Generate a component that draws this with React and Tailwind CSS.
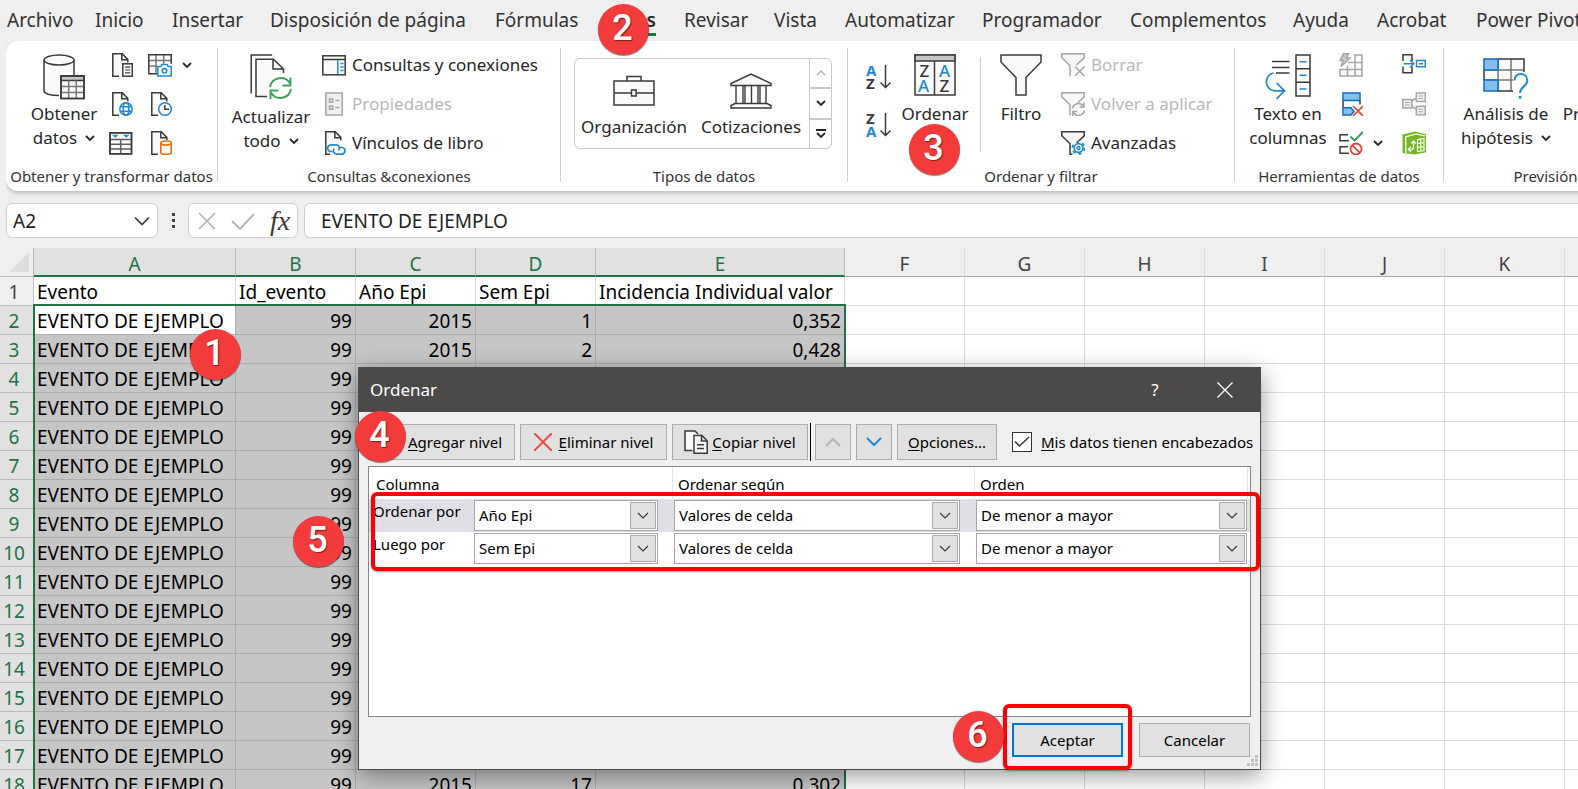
import React from "react";

const INK = "#3b3a39";
const BLUE = "#1f8ad2";
const GRAY = "#a6a5a4";
const PAPER = "#fafafa";

function Svg({ w, h, children, className = "" }) {
  return (
    <svg
      width={w}
      height={h}
      viewBox={`0 0 ${w} ${h}`}
      fill="none"
      strokeWidth="1.5"
      stroke={INK}
      aria-hidden="true"
      className={`block shrink-0 ${className}`}
    >
      {children}
    </svg>
  );
}

function Chevron({ className = "" }) {
  return (
    <Svg w={10} h={8} className={className}>
      <path d="M1 2l4 4 4-4" strokeWidth="1.8" stroke="#262626" />
    </Svg>
  );
}

/* ---------- ribbon icons ---------- */

const DatabaseTable = () => (
  <Svg w={42} h={46}>
    <path d="M1.500 7v30c1 3 7 4 15 4.500V22H31V7z" fill={PAPER} stroke="none" />
    <ellipse cx="16" cy="6" rx="15" ry="5" fill={PAPER} />
    <path d="M1 6v31c0 2.500 6 4.500 15 4.500M31 6v15" />
    <rect x="18" y="22" width="23" height="22.500" fill={PAPER} />
    <path d="M18 22h23v4.500H18z" fill="#c8c6c4" />
    <path d="M18 32.500h23M18 38.500h23M25.700 26.500v18M33.300 26.500v18" stroke="#797775" />
    <rect x="18" y="22" width="23" height="22.500" />
  </Svg>
);

const PageBase = ({ children }) => (
  <Svg w={24} h={24}>
    <path d="M3.800.8h9l6 6V23H3.800z" fill={PAPER} stroke="none" />
    <path d="M10 23.200H3.800V.8h9.400l5.600 5.600v3M12.800.8v6h6" />
    {children}
  </Svg>
);

const PageText = () => (
  <PageBase>
    <rect x="13.800" y="10.800" width="9.500" height="12.400" fill="#fff" />
    <path d="M16 14.200h5.200M16 17h5.200M16 19.800h5.200" strokeWidth="1.200" />
  </PageBase>
);
const PageGlobe = () => (
  <PageBase>
    <circle cx="17" cy="17" r="7.500" fill="#fff" stroke="none" />
    <g stroke={BLUE}>
      <circle cx="17" cy="17" r="6.200" />
      <ellipse cx="17" cy="17" rx="2.800" ry="6.200" />
      <path d="M11.500 14.800h11M11.500 19.200h11" />
    </g>
  </PageBase>
);
const PageClock = () => (
  <PageBase>
    <circle cx="17" cy="17" r="7.500" fill="#fff" stroke="none" />
    <circle cx="17" cy="17" r="6.300" stroke={BLUE} />
    <path d="M16.800 13v4.200H21" />
  </PageBase>
);
const PageDb = () => (
  <PageBase>
    <path d="M11 9h13v15H11z" fill="#fff" stroke="none" />
    <path
      d="M12.800 12v9.500c0 2.300 10.400 2.300 10.400 0V12"
      fill={PAPER}
      stroke="#e8730c"
      strokeWidth="1.700"
    />
    <ellipse cx="18" cy="12" rx="5.200" ry="2" fill={PAPER} stroke="#e8730c" strokeWidth="1.700" />
  </PageBase>
);
const PageLink = () => (
  <PageBase>
    <path d="M8 13h16v11H8z" fill="#fff" stroke="none" />
    <g stroke={BLUE} strokeWidth="1.700">
      <path d="M10.500 20.500h-1.500a3.300 3.300 0 0 1 0-6.600h5a3.300 3.300 0 0 1 2.500 5.500" />
      <path d="M18 16.500h1.700a3.300 3.300 0 0 1 0 6.600h-5a3.300 3.300 0 0 1-2.500-5.500" />
    </g>
  </PageBase>
);
const TableCamera = () => (
  <Svg w={24} h={24}>
    <path d="M.8 1.800h22.400v18H.8z" fill={PAPER} stroke="none" />
    <path d="M.8 7.500h22.400M.8 13h9M8 1.800v18M15.700 1.800v9" stroke="#797775" />
    <path d="M9 20.800H.8v-19h22.400v9" />
    <path d="M9 11h15v13H9z" fill="#fff" stroke="none" />
    <path d="M9.800 13.500h3l1.200-2h5l1.200 2h3V23H9.800z" stroke={BLUE} fill="#fff" />
    <circle cx="16.500" cy="17.800" r="2.300" stroke={BLUE} />
  </Svg>
);
const TableFilter = () => (
  <Svg w={24} h={24}>
    <rect x="1" y="1.800" width="21.500" height="21" fill={PAPER} />
    <path d="M1 8.500h21.500M1 13.300h21.500M1 18h21.500M11.700 8.500v14" stroke="#605e5c" />
    <path d="M3 3.800h6.500L6.300 6.800zM14 3.800h6.500l-3.200 3z" fill={BLUE} stroke="none" />
    <rect x="1" y="1.800" width="21.500" height="21" />
  </Svg>
);
const RefreshAll = () => (
  <Svg w={42} h={46}>
    <path d="M1.200 39.500V1h21" />
    <path d="M6 42.500V5.300h17.500L33.500 15v5H24l-8 20v2.500z" fill={PAPER} stroke="none" />
    <path d="M17 42.500H6V5.300h17.500L33.500 15v4M23 5.300V15h10.500" />
    <g stroke="#3fa35a" strokeWidth="1.900">
      <path d="M20 33a10.800 10.800 0 0 1 20-3.500M40.500 23.500v8h-8" />
      <path d="M41 35a10.800 10.800 0 0 1-20 3.500M20.500 45v-8.500h8" />
    </g>
  </Svg>
);
const PaneIcon = () => (
  <Svg w={24} h={24}>
    <rect x=".8" y="2.800" width="22.400" height="19" fill={PAPER} />
    <path d="M.8 6.500h22.400" />
    <path d="M15.800 7.300V21" stroke={BLUE} />
    <path d="M18.500 10.500h3M18.500 14h3M18.500 17.500h3" stroke={BLUE} />
  </Svg>
);
const PropsIcon = () => (
  <Svg w={24} h={24}>
    <g stroke={GRAY}>
      <rect x="3.800" y="1" width="16.400" height="22" fill="#f0f0f0" />
      <rect x="7.500" y="7" width="3.200" height="3.200" />
      <rect x="7.500" y="14" width="3.200" height="3.200" />
      <path d="M13.500 8.600h4M13.500 15.600h4" />
    </g>
  </Svg>
);
const Briefcase = () => (
  <Svg w={42} h={36}>
    <rect x="1" y="8" width="40" height="24" fill={PAPER} />
    <path d="M14 8V3.500h14V8M1 20h17M24 20h17" />
    <rect x="18.500" y="17" width="4.600" height="6" fill="#fff" />
  </Svg>
);
const Bank = () => (
  <Svg w={42} h={36}>
    <path d="M1 12.500v-2L21 1l20 9.500v2z" fill={PAPER} />
    <path
      d="M6 12.500v18M13 12.500v18M15 12.500v18M21.500 12.500v18M28 12.500v18M30 12.500v18M36 12.500v18"
      strokeWidth="1.400"
    />
    <path d="M1 35v-2.500l4-2h32l4 2V35z" fill={PAPER} />
  </Svg>
);

function SortIcon({ top, bottom }) {
  const tone = (c) => (c === "A" ? BLUE : INK);
  return (
    <Svg w={26} h={26}>
      <g stroke="none" fontFamily="Noto Sans, sans-serif" fontWeight="700" fontSize="15">
        <text x="0" y="12" fill={tone(top)}>{top}</text>
        <text x="0" y="25" fill={tone(bottom)}>{bottom}</text>
      </g>
      <path d="M19.500 1v22M14.500 18.500l5 5 5-5" />
    </Svg>
  );
}
const SortDialog = () => (
  <Svg w={42} h={42}>
    <rect x="1" y="1" width="40" height="40" fill={PAPER} />
    <path d="M1 1h40v6H1z" fill="#c8c6c4" />
    <path d="M20.500 7v34" />
    <g stroke="none" fontFamily="Noto Sans, sans-serif" fontSize="17" fontWeight="500">
      <text x="5.500" y="22.500" fill={INK}>Z</text>
      <text x="4" y="37.500" fill={BLUE}>A</text>
      <text x="25" y="22.500" fill={BLUE}>A</text>
      <text x="25.500" y="37.500" fill={INK}>Z</text>
    </g>
  </Svg>
);
const Funnel = () => (
  <Svg w={42} h={42}>
    <path d="M1 1h40v7L26 23.500V41H16V23.500L1 8z" fill={PAPER} />
  </Svg>
);
function SmallFunnel({ tone, children }) {
  return (
    <Svg w={24} h={24}>
      <g stroke={tone}>
        <path d="M.8.8h22.400v4L15 11v4l-5 8V13.500L.8 4.800z" fill="#f6f6f6" stroke="none" />
        <path d="M15.500 12l7.700-7.200V.8H.8v4l8.200 8V23.200" />
        {children}
      </g>
    </Svg>
  );
}
const FunnelClear = () => (
  <SmallFunnel tone={GRAY}>
    <path d="M14 13.500l9.500 9.500M23.500 13.500L14 23" />
  </SmallFunnel>
);
const FunnelRedo = () => (
  <SmallFunnel tone={GRAY}>
    <circle cx="17.500" cy="17.500" r="7" fill="#fff" stroke="none" />
    <path d="M11.500 16.500a6 6 0 0 1 11-2M23 10.500v4.500h-4.500M23.500 18.500a6 6 0 0 1-11 2M11.800 24v-4.500h4.500" />
  </SmallFunnel>
);
const FunnelGear = () => (
  <SmallFunnel tone={INK}>
    <path d="M8.500 23.200h3" />
    <circle cx="17.500" cy="17" r="6.500" fill="#fff" stroke="none" />
    <circle cx="17.500" cy="17" r="4.300" stroke={BLUE} strokeWidth="1.700" />
    <circle cx="17.500" cy="17" r="1.500" stroke={BLUE} />
    <circle cx="17.500" cy="17" r="6" stroke={BLUE} strokeWidth="2" strokeDasharray="2.800 3.483" />
  </SmallFunnel>
);
const TextColumns = () => (
  <Svg w={46} h={46}>
    <path d="M7 7.500h17.500M7 13.500h17.500M11 19h13.500" />
    <rect x="31" y="1" width="14" height="41" fill={PAPER} />
    <path d="M31 14.700h14M31 28.300h14" />
    <path d="M34.500 7.800h7M34.500 21.300h7M34.500 35h7" stroke={BLUE} />
    <path d="M8.500 19A9 9 0 0 0 10 36.800h9M11.500 29l8 7.800-8 8" stroke={BLUE} strokeWidth="1.700" />
  </Svg>
);
const FlashFill = () => (
  <Svg w={24} h={24}>
    <g stroke={GRAY}>
      <path d="M1 16v7h22V2H15M1 16.500h22M9 9.500h14M8.500 13v10M16 2v21" fill="none" />
      <path d="M4.500.8h5L7.500 5H11L2 13.500l2-6H1z" fill="#c8c6c4" />
    </g>
  </Svg>
);
const RemoveDup = () => (
  <Svg w={24} h={24}>
    <path d="M4 8.500v7M21 8.500v4" />
    <rect x="4" y="1" width="17" height="7.500" fill="#83beec" stroke="#0f6cbd" />
    <path d="M12 15.800H4V23h8l3-3.500z" fill="#83beec" stroke="#0f6cbd" />
    <path d="M14 14l10 10M24 14L14 24" stroke="#e8403a" strokeWidth="1.700" />
  </Svg>
);
const Validation = () => (
  <Svg w={24} h={24}>
    <path d="M9 3.800H1v6h9M9 15.800H1v6.500h9" />
    <path d="M11.500 5.500l4 4L24 1" stroke="#2f9e4d" strokeWidth="1.800" />
    <circle cx="17" cy="18" r="5.500" fill="#fff" stroke="#e8403a" strokeWidth="1.800" />
    <path d="M13.200 14.200l7.600 7.600" stroke="#e8403a" strokeWidth="1.800" />
  </Svg>
);
const Consolidate = () => (
  <Svg w={24} h={24}>
    <path d="M1 8V1.800h9V8M1 13.500v6.300h9v-6.300" />
    <path d="M1.500 10.800h10M8 7l3.800 3.800L8 14.500" stroke={BLUE} />
    <path d="M14.500 7.500h8.800v6.300h-8.800zM17 10.700h4" stroke={BLUE} fill={PAPER} />
  </Svg>
);
const Relations = () => (
  <Svg w={24} h={24}>
    <g stroke={GRAY}>
      <path d="M9.500 9l5-3M9.500 14l5 3.500" />
      <rect x=".8" y="7.500" width="9" height="8.500" fill="#f0f0f0" />
      <rect x="14.300" y="1" width="9" height="8.500" fill="#f0f0f0" />
      <rect x="14.300" y="14.300" width="9" height="8.500" fill="#f0f0f0" />
      <path d="M3 10.500h4.500M3 13h4.500M16.500 4h4.500M16.500 6.500h4.500M16.500 17.300h4.500M16.500 19.800h4.500" strokeWidth="1" />
    </g>
  </Svg>
);
const DataModel = () => (
  <Svg w={24} h={24}>
    <path d="M.5 3.500L13 .5l11 2.800v18L13 23.500.5 22z" fill="#76b82a" stroke="none" />
    <path d="M3.800 22V5.800L14 3l9 1.800" stroke="#fff" strokeWidth="1.200" />
    <path
      d="M6.500 18.500c3 .8 5 0 5-2.500v-5.500M9.300 12.500l2.200-2.500 2.200 2.500M9 16l-2.700 2.500L9 20.500"
      stroke="#fff"
      strokeWidth="1.300"
    />
    <path d="M15.500 8.500l6.500-1v12l-6.500 1zM15.500 12.500l6.500-.8M15.500 16.500l6.500-.8M18.800 7.800V20" stroke="#fff" strokeWidth="1.100" />
  </Svg>
);
const WhatIf = () => (
  <Svg w={46} h={42}>
    <rect x="1" y="1" width="40" height="32" fill={PAPER} stroke="none" />
    <path d="M1 12h40M1 22h30M28 1v32M15 1v32" stroke="#797775" />
    <path d="M41 14V1H15M15 33h15M1 12v10" />
    <path d="M1 1h14v11H1zM1 22h14v11H1z" fill="#83beec" stroke="#0f6cbd" />
    <path d="M30 14h16v28H33V33h-3z" fill="#fff" stroke="none" />
    <path d="M31.500 22.500c0-9 12.800-8.500 12.800 0 0 6-7.300 6-7.300 12.500" stroke={BLUE} strokeWidth="2" />
    <path d="M35.800 38h2.600v2.600h-2.600z" fill={BLUE} stroke="none" />
  </Svg>
);

/* ---------- ribbon pieces ---------- */

function Group({ label, className, children }) {
  return (
    <section className={`flex h-[134px] shrink-0 flex-col border-r border-[#d0d0d0] ${className}`}>
      <div className="flex min-h-0 flex-1 items-start">{children}</div>
      <div className="h-[18px] whitespace-nowrap text-center text-[15px] leading-6 text-[#333]">
        {label}
      </div>
    </section>
  );
}

function BigButton({ icon, lines, chevron, className = "gap-[3px]" }) {
  return (
    <button
      type="button"
      className={`flex shrink-0 flex-col items-center pt-[6px] text-[17px] leading-6 whitespace-nowrap ${className}`}
    >
      <span className="flex h-[45px] items-start justify-center">{icon}</span>
      <span className="flex flex-col items-center">
        {lines.map((line, i) => (
          <span key={line} className="flex items-center gap-2">
            {line}
            {chevron && i === lines.length - 1 && <Chevron />}
          </span>
        ))}
      </span>
    </button>
  );
}

function IconButton({ icon, label, chevron }) {
  return (
    <button type="button" aria-label={label} className="flex h-6 items-center gap-[10px]">
      {icon}
      {chevron && <Chevron />}
    </button>
  );
}

function RowButton({ icon, text, disabled }) {
  return (
    <button
      type="button"
      disabled={disabled}
      className="flex h-6 items-center gap-[6px] whitespace-nowrap text-[17px] text-[#262626] disabled:text-[#b8b8b8]"
    >
      {icon}
      {text}
    </button>
  );
}

const TABS = [
  ["Archivo", "w-[88px]"],
  ["Inicio", "w-[77px]"],
  ["Insertar", "w-[98px]"],
  ["Disposición de página", "w-[225px]"],
  ["Fórmulas", "w-[107px]"],
  ["Datos", "w-[82px]"],
  ["Revisar", "w-[90px]"],
  ["Vista", "w-[71px]"],
  ["Automatizar", "w-[137px]"],
  ["Programador", "w-[148px]"],
  ["Complementos", "w-[163px]"],
  ["Ayuda", "w-[84px]"],
  ["Acrobat", "w-[99px]"],
  ["Power Pivot", "w-[120px]"],
];

function Tabs() {
  return (
    <nav className="flex h-[41px] shrink-0 overflow-hidden pl-[7px] text-[19px] text-[#333]">
      {TABS.map(([name, width]) => (
        <div key={name} className={`shrink-0 ${width}`}>
          <a
            href="#"
            className={`inline-block h-9 whitespace-nowrap pt-[6px] leading-7 ${
              name === "Datos" ? "border-b-3 border-[#107c41] font-semibold text-[#262626]" : ""
            }`}
          >
            {name}
          </a>
        </div>
      ))}
    </nav>
  );
}

function Ribbon() {
  return (
    <div className="ml-[6px] shrink-0 overflow-hidden pb-3">
      <div className="flex h-[150px] w-max min-w-full rounded-l-xl bg-white pt-[7px] text-[#262626] shadow-[0_2px_4px_rgba(0,0,0,0.22)]">
        <Group label="Obtener y transformar datos" className="w-[212px]">
          <BigButton icon={<DatabaseTable />} lines={["Obtener", "datos"]} chevron className="ml-[18px] w-[80px] gap-[3px]" />
          <div className="ml-[5px] flex flex-col gap-[15px] pt-[5px]">
            <IconButton icon={<PageText />} label="De texto/CSV" />
            <IconButton icon={<PageGlobe />} label="De la web" />
            <IconButton icon={<TableFilter />} label="De una tabla o rango" />
          </div>
          <div className="ml-[15px] flex flex-col gap-[15px] pt-[5px]">
            <IconButton icon={<TableCamera />} label="De imagen" chevron />
            <IconButton icon={<PageClock />} label="Orígenes recientes" />
            <IconButton icon={<PageDb />} label="Conexiones existentes" />
          </div>
        </Group>

        <Group label="Consultas &conexiones" className="w-[343px]">
          <BigButton icon={<RefreshAll />} lines={["Actualizar", "todo"]} chevron className="ml-[8px] w-[90px] gap-[6px]" />
          <div className="ml-[6px] flex flex-col gap-[15px] pt-[5px]">
            <RowButton icon={<PaneIcon />} text="Consultas y conexiones" />
            <RowButton icon={<PropsIcon />} text="Propiedades" disabled />
            <RowButton icon={<PageLink />} text="Vínculos de libro" />
          </div>
        </Group>

        <Group label="Tipos de datos" className="w-[287px]">
          <div className="mt-[10px] ml-[13px] flex h-[91px] w-[258px] overflow-hidden rounded-md border border-[#c8c8c8] text-[17px]">
            <button type="button" className="flex w-[118px] shrink-0 flex-col items-center pt-[14px]">
              <Briefcase />
              <span className="mt-[6px] leading-6">Organización</span>
            </button>
            <button type="button" className="flex w-[116px] shrink-0 flex-col items-center pt-[14px]">
              <Bank />
              <span className="mt-[6px] leading-6">Cotizaciones</span>
            </button>
            <div className="flex flex-1 flex-col divide-y-2 divide-[#c8c8c8] border-l border-[#c8c8c8]">
              <button type="button" aria-label="Anterior" className="flex flex-1 items-center justify-center">
                <Svg w={10} h={8}>
                  <path d="M1 6l4-4 4 4" stroke="#b0b0b0" />
                </Svg>
              </button>
              <button type="button" aria-label="Siguiente" className="flex flex-1 items-center justify-center">
                <Chevron />
              </button>
              <button type="button" aria-label="Más" className="flex flex-1 items-center justify-center">
                <Svg w={12} h={10}>
                  <path d="M1 1h10M2 4l4 4 4-4" strokeWidth="1.800" stroke="#262626" />
                </Svg>
              </button>
            </div>
          </div>
        </Group>

        <Group label="Ordenar y filtrar" className="w-[387px]">
          <div className="ml-[18px] flex flex-col gap-[22px] pt-[16px]">
            <button type="button" aria-label="Ordenar de A a Z">
              <SortIcon top="A" bottom="Z" />
            </button>
            <button type="button" aria-label="Ordenar de Z a A">
              <SortIcon top="Z" bottom="A" />
            </button>
          </div>
          <BigButton icon={<SortDialog />} lines={["Ordenar"]} className="ml-[3px] w-[80px] gap-[3px]" />
          <div className="mt-[9px] ml-[5px] h-[95px] border-l border-[#d0d0d0]" />
          <BigButton icon={<Funnel />} lines={["Filtro"]} className="w-[80px] gap-[3px]" />
          <div className="flex flex-col gap-[15px] pt-[5px]">
            <RowButton icon={<FunnelClear />} text="Borrar" disabled />
            <RowButton icon={<FunnelRedo />} text="Volver a aplicar" disabled />
            <RowButton icon={<FunnelGear />} text="Avanzadas" />
          </div>
        </Group>

        <Group label="Herramientas de datos" className="w-[209px]">
          <BigButton icon={<TextColumns />} lines={["Texto en", "columnas"]} className="ml-[10px] w-[86px] gap-[3px]" />
          <div className="ml-[8px] flex w-[48px] flex-col gap-[15px] pt-[5px]">
            <IconButton icon={<FlashFill />} label="Relleno rápido" />
            <IconButton icon={<RemoveDup />} label="Quitar duplicados" />
            <IconButton icon={<Validation />} label="Validación de datos" chevron />
          </div>
          <div className="ml-[15px] flex flex-col gap-[15px] pt-[5px]">
            <IconButton icon={<Consolidate />} label="Consolidar" />
            <IconButton icon={<Relations />} label="Relaciones" />
            <IconButton icon={<DataModel />} label="Administrar modelo de datos" />
          </div>
        </Group>

        <Group label="Previsión" className="w-[204px]">
          <BigButton
            icon={<span className="pt-1"><WhatIf /></span>}
            lines={["Análisis de", "hipótesis"]}
            chevron
            className="ml-[12px] w-[100px] gap-[3px]"
          />
          <BigButton
            icon={
              <Svg w={42} h={42}>
                <path d="M1 40V1h40v39z" />
              </Svg>
            }
            lines={["Previsión"]}
            className="ml-[3px] w-[80px] gap-[3px]"
          />
        </Group>
      </div>
    </div>
  );
}

function FormulaBar() {
  return (
    <div className="mb-[10px] ml-[6px] flex h-[35px] shrink-0 text-[19px] text-[#222]">
      <div className="flex w-[152px] items-center rounded-md border border-[#cfcfcf] bg-white pr-[7px]">
        <input aria-label="Cuadro de nombres" defaultValue="A2" className="w-full min-w-0 bg-transparent pt-[2px] pl-[6px] outline-none" />
        <Svg w={16} h={10}>
          <path d="M1 1.500l7 7 7-7" strokeWidth="1.700" />
        </Svg>
      </div>
      <div className="flex w-[30px] flex-col items-center justify-center gap-[3px]" aria-hidden="true">
        <i className="size-[3px] bg-[#444]" />
        <i className="size-[3px] bg-[#444]" />
        <i className="size-[3px] bg-[#444]" />
      </div>
      <div className="flex w-[110px] items-center rounded-md border border-[#cfcfcf] bg-white pl-[9px]">
        <button type="button" aria-label="Cancelar entrada">
          <Svg w={18} h={18}>
            <path d="M1 1l16 16M17 1L1 17" stroke="#b4b4b4" strokeWidth="1.700" />
          </Svg>
        </button>
        <button type="button" aria-label="Introducir" className="ml-[15px]">
          <Svg w={24} h={18}>
            <path d="M1 9l8 8L23 2" stroke="#b4b4b4" strokeWidth="1.900" />
          </Svg>
        </button>
        <button
          type="button"
          aria-label="Insertar función"
          className="ml-[15px] font-['Liberation_Serif',serif] text-[28px] leading-7 italic text-[#3b3a39]"
        >
          fx
        </button>
      </div>
      <input
        aria-label="Barra de fórmulas"
        defaultValue="EVENTO DE EJEMPLO"
        className="ml-[6px] min-w-0 flex-1 rounded-l-md border border-r-0 border-[#cfcfcf] bg-white pt-[2px] pl-4 outline-none"
      />
    </div>
  );
}

/* ---------- sheet ---------- */

const COLUMNS = "ABCDEFGHIJKLMNOP".split("");
const COLUMN_WIDTHS = { A: "w-[202px]", E: "w-[249px]" };
const HEADINGS = ["Evento", "Id_evento", "Año Epi", "Sem Epi", "Incidencia Individual valor"];
const INCIDENCE = { 2: "0,352", 3: "0,428", 18: "0,302" };

function Sheet() {
  const rows = Array.from({ length: 17 }, (_, i) => i + 2);
  return (
    <div className="relative min-h-0 flex-1 overflow-hidden">
      <table className="w-max table-fixed border-separate border-spacing-0 text-[19px] leading-[26px] whitespace-nowrap text-black">
        <colgroup>
          <col className="w-[34px]" />
          {COLUMNS.map((c) => (
            <col key={c} className={COLUMN_WIDTHS[c] || "w-[120px]"} />
          ))}
        </colgroup>
        <thead>
          <tr className="h-[29px]">
            <th className="border-b border-r border-[#b5b5b5] bg-[#efefef] p-0 pr-[3px] pl-2">
              <svg width="22" height="22" viewBox="0 0 22 22" aria-hidden="true" className="block">
                <path d="M1 21L21 1v20z" fill="#dedede" />
              </svg>
            </th>
            {COLUMNS.map((c, i) => (
              <th
                key={c}
                scope="col"
                className={`border-r p-0 font-normal ${
                  i < 5
                    ? "border-b-2 border-r-[#bcbcbc] border-b-[#217346] bg-[#e1e1e1] pt-[5px] leading-[22px] text-[#217346]"
                    : "border-b border-r-[#dcdcdc] border-b-[#a6a6a6] bg-[#efefef] pt-1 leading-6 text-[#444]"
                }`}
              >
                {c}
              </th>
            ))}
          </tr>
        </thead>
        <tbody>
          <tr className="h-[29px] bg-white">
            <th scope="row" className="border-r border-b border-[#c0c0c0] bg-[#efefef] p-0 pt-[2px] pr-[5px] font-normal text-[#444]">
              1
            </th>
            {COLUMNS.map((c, i) => (
              <td key={c} className="border-r border-b border-[#dcdcdc] p-0 pt-[2px] pl-[3px]">
                {HEADINGS[i]}
              </td>
            ))}
          </tr>
          {rows.map((r) => (
            <tr key={r} className="h-[29px] bg-white">
              <th scope="row" className="border-r border-b border-[#b9b9b9] bg-[#e1e1e1] p-0 pt-[2px] pr-[5px] font-normal text-[#217346]">
                {r}
              </th>
              <td className={`border-r border-b border-[#adadad] p-0 pt-[2px] pl-[3px] ${r === 2 ? "bg-white" : "bg-[#c6c6c6]"}`}>
                EVENTO DE EJEMPLO
              </td>
              {[99, 2015, r - 1, INCIDENCE[r]].map((v, i) => (
                <td key={i} className="border-r border-b border-[#adadad] bg-[#c6c6c6] p-0 pt-[2px] pr-[3px] text-right">
                  {v}
                </td>
              ))}
              {COLUMNS.slice(5).map((c) => (
                <td key={c} className="border-r border-b border-[#dcdcdc] p-0" />
              ))}
            </tr>
          ))}
        </tbody>
      </table>
      <div className="pointer-events-none absolute top-[56px] -bottom-2 left-[33px] w-[813px] border-2 border-[#217346]" />
    </div>
  );
}

/* ---------- dialog ---------- */

function DialogButton({ className = "", children, ...rest }) {
  return (
    <button
      type="button"
      className={`flex shrink-0 items-center justify-center whitespace-nowrap bg-[#e1e1e1] text-black ${className}`}
      {...rest}
    >
      {children}
    </button>
  );
}

function Combo({ label, value }) {
  return (
    <div className="relative h-[31px] border border-[#a5a5ab] bg-white">
      <select aria-label={label} className="h-full w-full appearance-none bg-transparent pr-8 pl-1 outline-none">
        <option>{value}</option>
      </select>
      <span className="pointer-events-none absolute inset-y-px right-px flex w-[26px] items-center justify-center border border-[#adadad] bg-[#e1e1e1]">
        <Svg w={12} h={8}>
          <path d="M1 1l5 5 5-5" strokeWidth="1.200" />
        </Svg>
      </span>
    </div>
  );
}

function SortRow({ label, column, selected }) {
  return (
    <div className={`grid grid-cols-[105px_184px_16px_286px_16px_271px] py-px ${selected ? "bg-[#e0dfe5]" : ""}`}>
      <span className="pl-1 leading-[22px]">{label}</span>
      <Combo label={`${label}: columna`} value={column} />
      <span />
      <Combo label={`${label}: ordenar según`} value="Valores de celda" />
      <span />
      <Combo label={`${label}: orden`} value="De menor a mayor" />
    </div>
  );
}

function Key({ children }) {
  return <span className="underline underline-offset-2">{children}</span>;
}

function Dialog() {
  return (
    <div
      role="dialog"
      aria-label="Ordenar"
      className="absolute top-[367px] left-[358px] flex h-[403px] w-[903px] flex-col border border-[#4c4b49] bg-[#efefef] text-[15px] text-black shadow-[0_6px_22px_rgba(0,0,0,0.4)]"
    >
      <div className="flex h-11 shrink-0 items-center bg-[#4c4a48] pl-[11px] text-[17px] text-white">
        <h1 className="flex-1">Ordenar</h1>
        <button type="button" aria-label="Ayuda" className="w-[70px]">
          ?
        </button>
        <button type="button" aria-label="Cerrar" className="flex w-[70px] justify-center">
          <Svg w={16} h={16}>
            <path d="M.5.5l15 15M15.500.5l-15 15" stroke="#fff" strokeWidth="1.300" />
          </Svg>
        </button>
      </div>

      <div className="flex h-[54px] shrink-0 items-center pt-[6px] pl-[9px]">
        <DialogButton className="h-9 w-[147px] justify-end border border-[#adadad] pr-3">
          <span><Key>A</Key>gregar nivel</span>
        </DialogButton>
        <DialogButton className="ml-[5px] h-9 w-[147px] gap-[7px] border border-[#adadad]">
          <Svg w={18} h={18}>
            <path d="M0 0l18 18M18 0L0 18" stroke="#e8504a" strokeWidth="2" />
          </Svg>
          <span><Key>E</Key>liminar nivel</span>
        </DialogButton>
        <DialogButton className="ml-[5px] h-9 w-[136px] gap-1 border border-[#adadad]">
          <Svg w={24} h={24}>
            <path d="M8.500 20.500H1V1h10l3 3" fill={PAPER} />
            <path d="M10 5.500h8l5.200 5.200v12.500H10zM17.500 5.500v5.500h5.500M13 14.800h7M13 18.500h7" fill="#fff" />
          </Svg>
          <span><Key>C</Key>opiar nivel</span>
        </DialogButton>
        <span className="ml-[2px] h-[38px] w-px shrink-0 bg-black" />
        <DialogButton aria-label="Subir" className="ml-1 h-9 w-9 border border-[#adadad]">
          <Svg w={16} h={10}>
            <path d="M1 9l7-7 7 7" stroke="#b4b4b4" strokeWidth="2" />
          </Svg>
        </DialogButton>
        <DialogButton aria-label="Bajar" className="ml-[5px] h-9 w-9 border border-[#adadad]">
          <Svg w={16} h={10}>
            <path d="M1 1l7 7 7-7" stroke={BLUE} strokeWidth="2" />
          </Svg>
        </DialogButton>
        <DialogButton className="ml-[5px] h-9 w-[100px] border border-[#adadad]">
          <span><Key>O</Key>pciones...</span>
        </DialogButton>
        <label className="ml-[15px] flex items-center gap-[9px] whitespace-nowrap">
          <span className="relative flex size-5">
            <input
              type="checkbox"
              defaultChecked
              className="peer size-5 appearance-none border border-[#333] bg-white"
            />
            <Svg w={16} h={12} className="pointer-events-none invisible absolute top-1 left-[2px] peer-checked:visible">
              <path d="M1 5.500l4.500 4.500L15 1" strokeWidth="1.600" />
            </Svg>
          </span>
          <span><Key>M</Key>is datos tienen encabezados</span>
        </label>
      </div>

      <div className="mx-[9px] h-[251px] shrink-0 border border-[#828790] bg-white">
        <div className="grid h-8 grid-cols-[304px_302px_273px] pt-px leading-[32px]">
          <span className="border-r border-[#e5e5e5] pl-[7px]">Columna</span>
          <span className="border-r border-[#e5e5e5] pl-[5px]">Ordenar según</span>
          <span className="border-r border-[#e5e5e5] pl-[5px]">Orden</span>
        </div>
        <SortRow label="Ordenar por" column="Año Epi" selected />
        <SortRow label="Luego por" column="Sem Epi" />
      </div>

      <div className="flex flex-1 items-start justify-end gap-4 pt-[6px] pr-[10px]">
        <DialogButton className="h-[34px] w-[111px] border-2 border-[#0078d7]">Aceptar</DialogButton>
        <DialogButton className="h-[34px] w-[111px] border border-[#adadad]">Cancelar</DialogButton>
      </div>
      <svg width="12" height="12" viewBox="0 0 12 12" aria-hidden="true" className="absolute right-[2px] bottom-[2px]">
        <path
          d="M9 0h3v3H9zM5 4h3v3H5zM9 4h3v3H9zM1 8h3v3H1zM5 8h3v3H5zM9 8h3v3H9z"
          fill="#bfbfbf"
        />
      </svg>
    </div>
  );
}

/* ---------- annotations ---------- */

const STEPS = [
  ["1", "left-[190px] top-[329px]"],
  ["2", "left-[598px] top-[4px]"],
  ["3", "left-[909px] top-[124px]"],
  ["4", "left-[355px] top-[411px]"],
  ["5", "left-[293px] top-[516px]"],
  ["6", "left-[953px] top-[711px]"],
];

function Annotations() {
  return (
    <div className="pointer-events-none">
      <div className="absolute top-[492px] left-[371px] h-[79px] w-[889px] rounded-md border-4 border-[#ff0000] shadow-[0_1px_2px_rgba(0,0,0,0.4)]" />
      <div className="absolute top-[704px] left-[1003px] h-[66px] w-[129px] rounded-md border-4 border-[#ff0000] shadow-[0_1px_2px_rgba(0,0,0,0.4)]" />
      {STEPS.map(([n, place]) => (
        <div
          key={n}
          className={`absolute flex size-[51px] items-center justify-center rounded-full bg-[#f33b3b] pr-[2px] pb-1 font-['Roboto',sans-serif] text-[36px] leading-none font-medium text-white shadow-[0_1px_1px_rgba(0,0,0,0.5)] ${place}`}
        >
          <span className="[text-shadow:1px_1px_1px_rgba(0,0,0,0.5)]">{n}</span>
        </div>
      ))}
    </div>
  );
}

export default function App() {
  return (
    <div className="relative flex h-screen flex-col overflow-hidden bg-[#efefef] font-['Noto_Sans',sans-serif]">
      <Tabs />
      <Ribbon />
      <FormulaBar />
      <Sheet />
      <Dialog />
      <Annotations />
    </div>
  );
}
